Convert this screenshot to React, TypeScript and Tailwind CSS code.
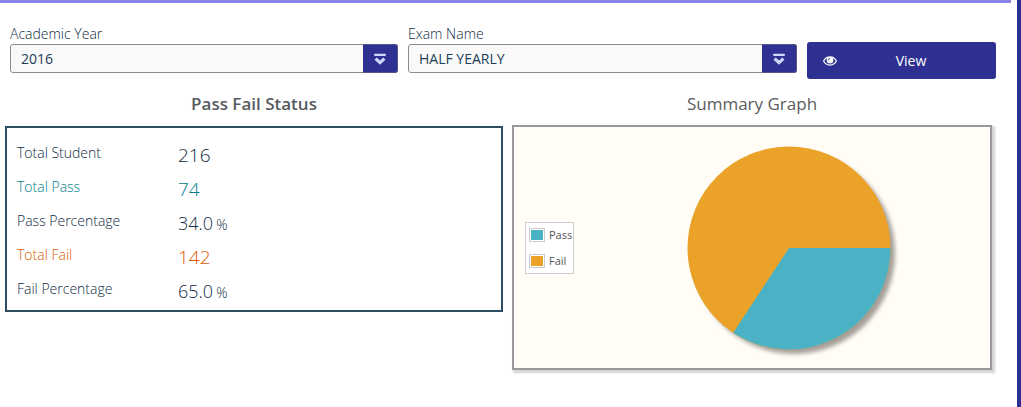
import React from "react";

type SelectFieldProps = { id: string; label: string; options: string[] };

function SelectField({ id, label, options }: SelectFieldProps) {
  return (
    <div className="min-w-0">
      <label htmlFor={id} className="block h-5 text-sm leading-5 font-light">
        {label}
      </label>
      <div className="relative">
        <select
          id={id}
          className="block h-[29px] w-full appearance-none rounded-[3px] border border-[#8c8c8c] bg-[#f9f9f9] pr-10 pl-[10px] text-sm font-medium text-[#1d3d56]"
        >
          {options.map((option) => (
            <option key={option}>{option}</option>
          ))}
        </select>
        <span className="pointer-events-none absolute inset-y-0 right-0 flex w-[35px] items-center justify-center rounded-r-[3px] border border-l-0 border-[#55558c] bg-[#2e3191]">
          <svg width="14" height="13" viewBox="0 0 14 13" fill="none" stroke="#cdd8fb" aria-hidden="true" className="mt-[2px]">
            <path d="M2 1.8H12" strokeWidth="2.2" strokeLinecap="round" />
            <path d="M2.6 5.6L7 9.6L11.4 5.6" strokeWidth="3.2" />
          </svg>
        </span>
      </div>
    </div>
  );
}

const passed = 74;
const failed = 142;

const rows = [
  { label: "Total Student", value: "216", color: "" },
  { label: "Total Pass", value: String(passed), color: "text-[#007f88]" },
  { label: "Pass Percentage", value: "34.0", percent: true, color: "" },
  { label: "Total Fail", value: String(failed), color: "text-[#dc5a00]" },
  { label: "Fail Percentage", value: "65.0", percent: true, color: "" },
];

function PieChart() {
  const r = 101.5;
  const c = 102;
  const angle = (passed / (passed + failed)) * 2 * Math.PI;
  const x = c + r * Math.cos(angle);
  const y = c + r * Math.sin(angle);
  return (
    <svg width="214" height="214" viewBox="0 0 214 214" role="img" aria-label="Pass and fail shares">
      <defs>
        <filter id="soft" x="-10%" y="-10%" width="120%" height="120%">
          <feGaussianBlur stdDeviation="2" />
        </filter>
      </defs>
      <circle cx={c + 5} cy={c + 5} r={r - 0.5} fill="#6b605c" opacity="0.6" filter="url(#soft)" />
      <circle cx={c} cy={c} r={r} fill="#eaa228" />
      <path d={`M${c} ${c}L${c + r} ${c}A${r} ${r} 0 0 1 ${x} ${y}Z`} fill="#4bb2c5" />
    </svg>
  );
}

export default function App() {
  return (
    <div className="flex min-h-screen bg-white font-['Open_Sans',sans-serif] text-[#0f2c45]">
      <main className="mr-[6px] min-w-0 flex-1 border-t-[3px] border-[#8583e6]">
        <form
          className="grid grid-cols-[388fr_389fr_189fr] gap-[10px] pt-[21px] pr-[15px] pl-[10px]"
          onSubmit={(e) => e.preventDefault()}
        >
          <SelectField id="year" label="Academic Year" options={["2016"]} />
          <SelectField id="exam" label="Exam Name" options={["HALF YEARLY"]} />
          <button
            type="submit"
            className="mt-[18px] flex h-[37px] items-center rounded-[3px] bg-[#2e3191] px-4 text-sm text-white"
          >
            <svg width="14" height="10" viewBox="0 0 14 10" aria-hidden="true">
              <path d="M.6 5C3.6 -.4 10.4 -.4 13.4 5C10.4 10.4 3.6 10.4 .6 5Z" fill="none" stroke="#fff" strokeWidth="1.2" />
              <circle cx="7" cy="4.3" r="3.3" fill="#fff" />
              <path d="M5.2 4.3A1.8 1.8 0 0 1 7 2.5" fill="none" stroke="#2e3191" strokeWidth=".8" />
            </svg>
            <span className="flex-1 pl-[5px] text-center">View</span>
          </button>
        </form>

        <div className="grid grid-cols-[498fr_480fr] items-start gap-[9px] pt-[13px] pr-[19px] pl-[5px]">
          <section>
            <h2 className="h-[34px] text-center text-[17px] leading-6 font-semibold text-[#555b60]">
              Pass Fail Status
            </h2>
            <div className="border-2 border-[#2c4d63] px-[10px] pt-[9px] pb-[3px]">
              <table className="w-full text-left text-sm font-light">
                <tbody>
                  {rows.map((row) => (
                    <tr key={row.label} className={row.color}>
                      <th scope="row" className="h-[34px] w-[161px] p-0 pb-[2px] align-middle font-light">
                        {row.label}
                      </th>
                      <td className={row.percent ? "p-0 pt-[2px] text-lg leading-6" : "p-0 pt-[2px] text-[19px] leading-6"}>
                        {row.value}
                        {row.percent && <span className="ml-[3px] text-sm">%</span>}
                      </td>
                    </tr>
                  ))}
                </tbody>
              </table>
            </div>
          </section>

          <section>
            <h2 className="h-[33px] text-center text-[17px] leading-6 text-[#5c5c5c]">Summary Graph</h2>
            <div className="flex items-center border-2 border-[#999] bg-[#fffdf6] py-[19px] pl-[11px] shadow-[2px_2px_2px_1px_#d4d4d4]">
              <ul className="flex h-[52px] w-[49px] flex-col justify-between border border-[#ccc] bg-white px-[3px] py-[4px] text-[11px] leading-4 text-[#555]">
                <li className="flex items-center gap-[4px]">
                  <span className="h-[14px] w-4 shrink-0 border border-[#ccc] bg-[#4bb2c5] bg-clip-content p-px" />
                  Pass
                </li>
                <li className="flex items-center gap-[4px]">
                  <span className="h-[14px] w-4 shrink-0 border border-[#ccc] bg-[#eaa228] bg-clip-content p-px" />
                  Fail
                </li>
              </ul>
              <div className="flex flex-1 justify-center pl-[23px]">
                <div className="-mb-[11px]">
                  <PieChart />
                </div>
              </div>
            </div>
          </section>
        </div>
      </main>
      <div className="w-1 shrink-0 bg-[#2e3191]" />
    </div>
  );
}
